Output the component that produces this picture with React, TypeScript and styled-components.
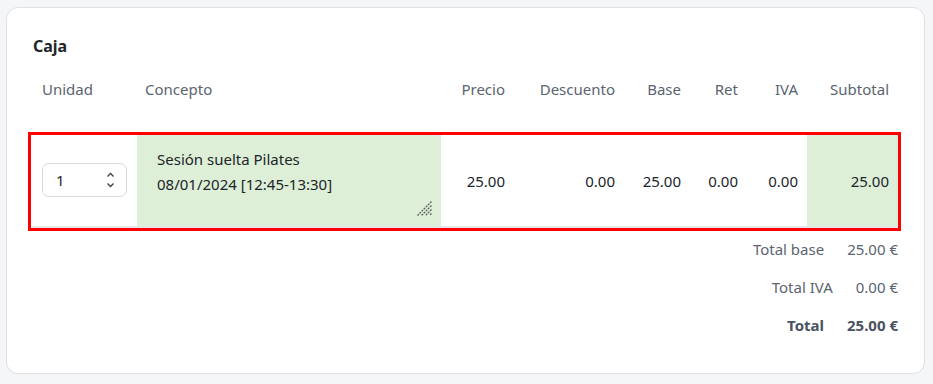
import React from 'react';
import styled, { createGlobalStyle } from 'styled-components';

const GlobalStyle = createGlobalStyle`
  body {
    margin: 0;
    background: #f5f6f8;
    font-family: 'Noto Sans', 'Open Sans', Arial, sans-serif;
    color: #212529;
  }
`;

const COLUMNS = '106px 304px 73px 110px 66px 57px 60px 91px';

const Card = styled.section`
  box-sizing: border-box;
  width: 919px;
  margin: 7px 0 0 6px;
  padding: 27px 26px 37px 24px;
  background: #fff;
  border: 1px solid #dde0e5;
  border-radius: 12px;
`;

const Title = styled.h2`
  margin: 0;
  padding-left: 2px;
  font-size: 16px;
  line-height: 22px;
  font-weight: 700;
  color: #212529;
`;

const Row = styled.div`
  display: grid;
  grid-template-columns: ${COLUMNS};
`;

const HeaderCell = styled.div<{ $align?: 'left' | 'right'; $pl?: number }>`
  padding: 21px 9px 35px ${(p) => (p.$pl !== undefined ? p.$pl : 9)}px;
  font-size: 15px;
  line-height: 22px;
  color: #5b6470;
  text-align: ${(p) => p.$align || 'right'};
`;

const ItemRow = styled(Row)`
  border-bottom: 2px solid #e3e6ea;
  outline: 3px solid #ff0000;
`;

const Cell = styled.div<{ $green?: boolean }>`
  position: relative;
  height: 91px;
  display: flex;
  align-items: center;
  justify-content: flex-end;
  padding: 0 9px;
  font-size: 15px;
  background: ${(p) => (p.$green ? '#ddefd7' : '#fff')};
`;

const UnitCell = styled(Cell)`
  justify-content: flex-start;
  padding: 0 0 0 11px;
`;

const ConceptCell = styled(Cell)`
  padding: 0;
  align-items: stretch;
  justify-content: stretch;
`;

const NumberBox = styled.div`
  box-sizing: border-box;
  display: flex;
  align-items: center;
  justify-content: space-between;
  width: 85px;
  height: 34px;
  margin-top: -2px;
  padding: 0 11px 0 13px;
  border: 1px solid #d5d9de;
  border-radius: 7px;
  font-size: 15px;
  color: #212529;
`;

const Stepper = styled.svg`
  display: block;
`;

const Concept = styled.textarea`
  box-sizing: border-box;
  width: 288px;
  height: 74px;
  margin: 8px;
  padding: 4px 12px;
  border: none;
  background: transparent;
  resize: none;
  font-family: inherit;
  font-size: 15px;
  line-height: 25px;
  color: #212529;
  overflow: hidden;
  outline: none;
`;

const Grip = styled.svg`
  position: absolute;
  right: 9px;
  bottom: 10px;
`;

const Totals = styled.div`
  display: flex;
  flex-direction: column;
  gap: 16px;
  margin-top: 10px;
`;

const TotalLine = styled.div<{ $strong?: boolean }>`
  display: flex;
  justify-content: flex-end;
  gap: 23px;
  font-size: 15px;
  line-height: 22px;
  color: ${(p) => (p.$strong ? '#4a5260' : '#5b6470')};
  font-weight: ${(p) => (p.$strong ? 700 : 400)};
`;

const headers: { label: string; align?: 'left' | 'right'; pl?: number }[] = [
  { label: 'Unidad', align: 'left', pl: 11 },
  { label: 'Concepto', align: 'left', pl: 8 },
  { label: 'Precio' },
  { label: 'Descuento' },
  { label: 'Base' },
  { label: 'Ret' },
  { label: 'IVA' },
  { label: 'Subtotal' },
];

const values = ['25.00', '0.00', '25.00', '0.00', '0.00'];

const App: React.FC = () => (
  <>
    <GlobalStyle />
    <Card>
      <Title>Caja</Title>
      <Row>
        {headers.map((h) => (
          <HeaderCell key={h.label} $align={h.align} $pl={h.pl}>
            {h.label}
          </HeaderCell>
        ))}
      </Row>
      <ItemRow>
        <UnitCell>
          <NumberBox>
            <span>1</span>
            <Stepper width="9" height="18" viewBox="0 0 9 18">
              <path d="M1.5 5.5 L4.5 2.5 L7.5 5.5" fill="none" stroke="#3a3f46" strokeWidth="1.3" />
              <path d="M1.5 12.5 L4.5 15.5 L7.5 12.5" fill="none" stroke="#3a3f46" strokeWidth="1.3" />
            </Stepper>
          </NumberBox>
        </UnitCell>
        <ConceptCell $green>
          <Concept readOnly defaultValue={'Sesión suelta Pilates\n08/01/2024 [12:45-13:30]'} />
          <Grip width="15" height="15" viewBox="0 0 15 15">
            <g stroke="#55595f" strokeWidth="1.3" strokeDasharray="2 1">
              <path d="M14.5 0.5 L0.5 14.5" />
              <path d="M14.5 4.5 L4.5 14.5" />
              <path d="M14.5 8.5 L8.5 14.5" />
              <path d="M14.5 12.5 L12.5 14.5" />
            </g>
          </Grip>
        </ConceptCell>
        {values.map((v, i) => (
          <Cell key={i}>{v}</Cell>
        ))}
        <Cell $green>25.00</Cell>
      </ItemRow>
      <Totals>
        <TotalLine>
          <span>Total base</span>
          <span>25.00 €</span>
        </TotalLine>
        <TotalLine>
          <span>Total IVA</span>
          <span>0.00 €</span>
        </TotalLine>
        <TotalLine $strong>
          <span>Total</span>
          <span>25.00 €</span>
        </TotalLine>
      </Totals>
    </Card>
  </>
);

export default App;
